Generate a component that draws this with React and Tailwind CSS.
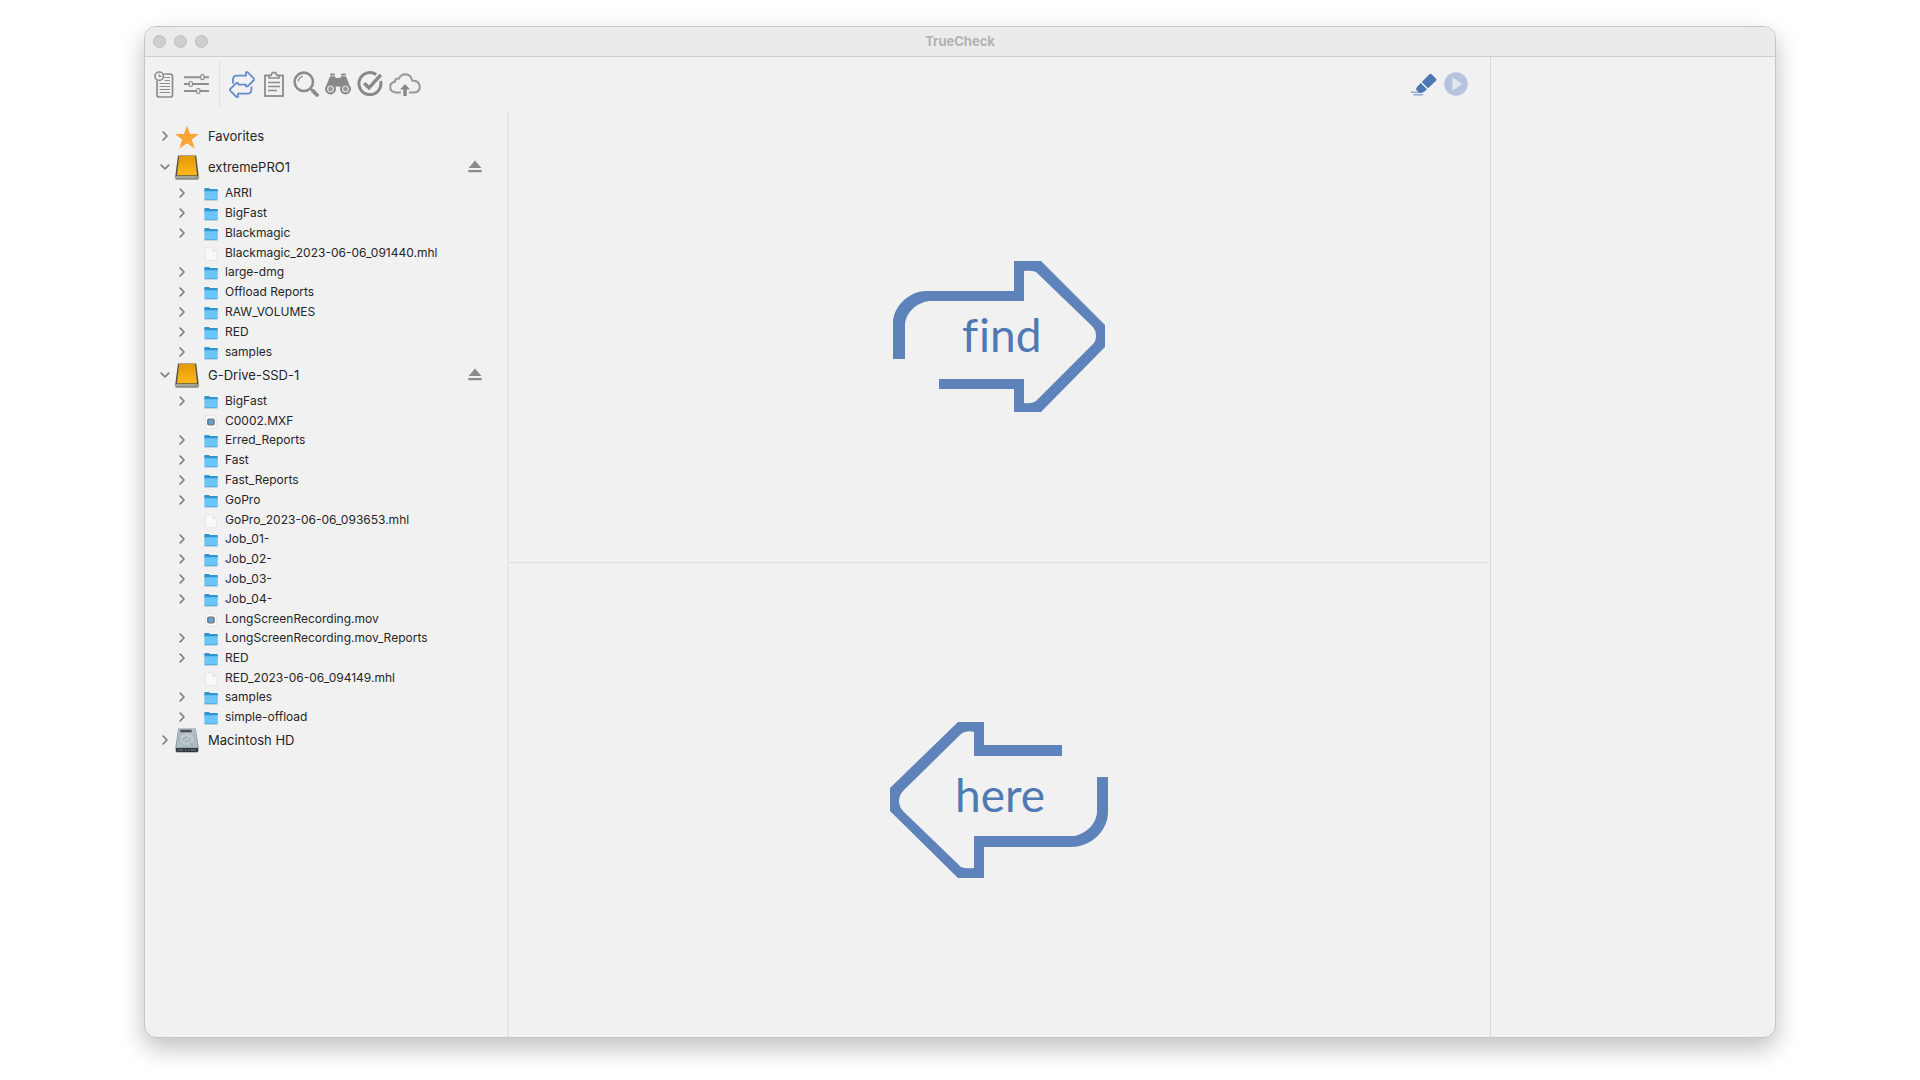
import React, { useState } from "react";

const VOLUMES = [
  { name: "Favorites", icon: "star", children: [] },
  {
    name: "extremePRO1",
    icon: "drive",
    ejectable: true,
    children: [
      { name: "ARRI", type: "folder" },
      { name: "BigFast", type: "folder" },
      { name: "Blackmagic", type: "folder" },
      { name: "Blackmagic_2023-06-06_091440.mhl", type: "file" },
      { name: "large-dmg", type: "folder" },
      { name: "Offload Reports", type: "folder" },
      { name: "RAW_VOLUMES", type: "folder" },
      { name: "RED", type: "folder" },
      { name: "samples", type: "folder" },
    ],
  },
  {
    name: "G-Drive-SSD-1",
    icon: "drive",
    ejectable: true,
    children: [
      { name: "BigFast", type: "folder" },
      { name: "C0002.MXF", type: "movie" },
      { name: "Erred_Reports", type: "folder" },
      { name: "Fast", type: "folder" },
      { name: "Fast_Reports", type: "folder" },
      { name: "GoPro", type: "folder" },
      { name: "GoPro_2023-06-06_093653.mhl", type: "file" },
      { name: "Job_01-", type: "folder" },
      { name: "Job_02-", type: "folder" },
      { name: "Job_03-", type: "folder" },
      { name: "Job_04-", type: "folder" },
      { name: "LongScreenRecording.mov", type: "movie" },
      { name: "LongScreenRecording.mov_Reports", type: "folder" },
      { name: "RED", type: "folder" },
      { name: "RED_2023-06-06_094149.mhl", type: "file" },
      { name: "samples", type: "folder" },
      { name: "simple-offload", type: "folder" },
    ],
  },
  { name: "Macintosh HD", icon: "internal", children: [] },
];

const Chevron = ({ open }) => (
  <svg viewBox="0 0 10 10" className="w-[10px] h-[10px]" fill="none" stroke="#808080" strokeWidth="1.7" strokeLinecap="round" strokeLinejoin="round">
    <path d={open ? "M1.2 3.2 5 6.8 8.8 3.2" : "M3.2 1.2 7 5 3.2 8.8"} />
  </svg>
);

const StarIcon = () => (
  <svg viewBox="0 0 24 24" className="w-6 h-6" fill="#fba43a">
    <path d="M12 0.5 15.1 9H24L16.9 14.4 19.6 23.5 12 18.2 4.4 23.5 7.1 14.4 0 9H8.9Z" />
  </svg>
);

const DriveIcon = () => (
  <svg viewBox="0 0 24 25" className="w-6 h-[25px]">
    <defs>
      <linearGradient id="drive-top" x1="0" y1="0" x2="0" y2="1">
        <stop offset="0" stopColor="#e39a00" />
        <stop offset="1" stopColor="#ffb81a" />
      </linearGradient>
    </defs>
    <path d="M3 .5H21.2L23.6 20V23.4Q23.6 24.5 22.4 24.5H1.6Q.4 24.5 .4 23.4V20Z" fill="#57534b" />
    <path d="M4.2 1H20L22 20.2H2Z" fill="url(#drive-top)" />
    <rect x=".8" y="21" width="22.4" height="2.8" rx="1" fill="#a5a59f" />
    <circle cx="21.4" cy="22.2" r=".9" fill="#3fbf4e" />
  </svg>
);

const InternalDriveIcon = () => (
  <svg viewBox="0 0 24 25" className="w-6 h-[25px]">
    <path d="M3.2 .5H20.8L23.6 19V22.6Q23.6 24.5 21.8 24.5H2.2Q.4 24.5 .4 22.6V19Z" fill="#86949a" />
    <path d="M3.6 1H20.4L22.7 19.4H1.3Z" fill="#b0bec3" />
    <ellipse cx="12" cy="11" rx="7.6" ry="6.8" fill="#bccace" stroke="#9fadb1" strokeWidth=".8" />
    <path d="M8 12.5Q8.4 9 12.5 8.8M10 13.5Q15 14 15.5 9.8M15 15 18.5 18" fill="none" stroke="#8d9ca1" strokeWidth=".9" />
    <rect x="5.2" y="1.8" width="11.5" height="2.4" rx=".4" fill="#4b5356" />
    <path d="M1 20H23V22.4Q23 24 21.6 24H2.4Q1 24 1 22.4Z" fill="#31383a" />
    <path d="M3 22H8M10 22H11.5M13 22H14.5M16 22H21" stroke="#7d878a" strokeWidth="1" />
  </svg>
);

const FolderIcon = () => (
  <svg viewBox="0 0 14 14" className="w-[14px] h-[14px]">
    <path d="M.3 1.8Q.3 1 1.1 1H4.8L6 2.1H13Q13.8 2.1 13.8 2.9V5H.3Z" fill="#2f95cf" />
    <path d="M.3 4.3H13.8V12.3Q13.8 13.1 13 13.1H1.1Q.3 13.1 .3 12.3Z" fill="#6bc6f8" />
    <path d="M.6 12.9H13.4" stroke="#4b9ac4" strokeWidth=".8" />
  </svg>
);

const FileIcon = () => (
  <svg viewBox="0 0 14 14" className="w-[14px] h-[14px]">
    <path d="M1.5 .6H8.4L12.5 4.7V13.4H1.5Z" fill="#f9f9f9" stroke="#e2e2e2" strokeWidth=".7" />
    <path d="M8.4 .6V4.7H12.5" fill="#ececec" stroke="#dedede" strokeWidth=".5" />
  </svg>
);

const MovieIcon = () => (
  <svg viewBox="0 0 14 14" className="w-[14px] h-[14px]">
    <path d="M1.5 .6H9.4L12.5 3.7V13.4H1.5Z" fill="#fafafa" stroke="#dedede" strokeWidth=".7" />
    <rect x="3" y="3.4" width="7.8" height="7.2" rx="2" fill="#777d82" />
    <circle cx="6.9" cy="7" r="2.4" fill="#5fa3e4" />
  </svg>
);

const EjectIcon = () => (
  <svg viewBox="0 0 14 13" className="w-[14px] h-[13px]" fill="#8a8a8a">
    <path d="M7 .5 13.4 8H.6Z" />
    <rect x=".3" y="10" width="13.4" height="2.2" />
  </svg>
);

const VOLUME_ICONS = {
  star: StarIcon,
  drive: DriveIcon,
  internal: InternalDriveIcon,
};

const ENTRY_ICONS = {
  folder: FolderIcon,
  file: FileIcon,
  movie: MovieIcon,
};

/* Toolbar icons */

const ReportIcon = () => (
  <svg viewBox="0 0 20 27" className="w-5 h-[27px]" fill="none" stroke="#8c8c8c">
    <path d="M9.5 3H16Q18.5 3 18.5 5.5V24Q18.5 26 16.5 26H5Q3 26 3 24V9.5" strokeWidth="1.7" />
    <path d="M10.5 6.5H16M10.5 9.5H16M5.5 12.5H16M5.5 15.5H16M5.5 18.5H16M5.5 21.5H16" strokeWidth="1.2" />
    <circle cx="5.2" cy="5.2" r="4.2" strokeWidth="1.6" />
    <path d="M5.2 3V5.4H7.4" strokeWidth="1.1" />
  </svg>
);

const SlidersIcon = () => (
  <svg viewBox="0 0 25 20" className="w-[25px] h-5" fill="#f1f1f1" stroke="#8f8f8f">
    <path d="M0 3.2H25M0 10H25M0 17H25" strokeWidth="2" />
    <rect x="16.8" y=".7" width="3.2" height="5" rx="1.2" strokeWidth="1.2" />
    <rect x="5.2" y="7.5" width="3.2" height="5" rx="1.2" strokeWidth="1.2" />
    <rect x="12.7" y="14.5" width="3.2" height="5" rx="1.2" strokeWidth="1.2" />
  </svg>
);

const CompareIcon = () => (
  <svg viewBox="0 0 26 27" className="w-[26px] h-[27px]" fill="none" stroke="#678dca" strokeWidth="1.8" strokeLinejoin="round">
    <path d="M4 12.5V8.5Q4 4.7 7.8 4.7H17V1.2H18.6L25 7.7V9L18.6 15.4H17V13.6H9" />
    <path d="M22.4 15.5V18.8Q22.4 22.6 18.6 22.6H9V26H7.5L1 19.4V18.2L7.5 11.8H9V13.6" />
  </svg>
);

const ClipboardIcon = () => (
  <svg viewBox="0 0 20 26" className="w-5 h-[26px]" fill="none" stroke="#8c8c8c">
    <rect x="1" y="4.5" width="18" height="20.5" strokeWidth="1.8" />
    <path d="M5 7V4.5H7L8.3 1.6H11.7L13 4.5H15V7Z" fill="#f1f1f1" strokeWidth="1.6" />
    <path d="M4 11.5H16M4 15.5H16M4 19.5H13" strokeWidth="1.5" />
  </svg>
);

const MagnifierIcon = () => (
  <svg viewBox="0 0 26 26" className="w-[26px] h-[26px]" fill="none" stroke="#8c8c8c">
    <circle cx="10.8" cy="10.8" r="9.2" strokeWidth="2.6" />
    <path d="M5.2 10.5Q5.8 6.2 9.8 5.3" strokeWidth="1.2" />
    <path d="M17.5 17.5 20 20" strokeWidth="2" />
    <path d="M19.7 19.7 24 24" strokeWidth="3.8" strokeLinecap="round" />
  </svg>
);

const BinocularsIcon = () => (
  <svg viewBox="0 0 26 22" className="w-[26px] h-[22px]">
    <path d="M5 3.2H9.8L10.8 5H15.2L16.2 3.2H21L25.6 15L20.5 20 16.2 16 15.2 13.4H10.8L9.8 16 5.5 20 .4 15Z" fill="#888" />
    <rect x="5" y=".4" width="5" height="2.2" rx="1" fill="#888" />
    <rect x="16" y=".4" width="5" height="2.2" rx="1" fill="#888" />
    <circle cx="5.5" cy="16" r="4.5" fill="#d4d4d4" stroke="#888" strokeWidth="1.9" />
    <circle cx="20.5" cy="16" r="4.5" fill="#d4d4d4" stroke="#888" strokeWidth="1.9" />
    <circle cx="5.5" cy="16" r="2.2" fill="#999" />
    <circle cx="20.5" cy="16" r="2.2" fill="#999" />
  </svg>
);

const CheckIcon = () => (
  <svg viewBox="0 0 26 26" className="w-[26px] h-[26px]" fill="none" stroke="#888">
    <path d="M19.2 3.6A11 11 0 1 0 23.6 10" strokeWidth="3" />
    <path d="M7.2 12.2 12 16.8 23.8 3.8" strokeWidth="3.4" />
  </svg>
);

const CloudIcon = () => (
  <svg viewBox="0 0 32 23" className="w-8 h-[23px]">
    <path d="M12 19.5H7Q1.2 19 1.2 14 1.2 9.6 5.8 8.8 6.2 5.4 9.8 5.6 12 1.2 16.4 1.2 22 1.4 23.2 7.6 30.4 7.8 30.8 13.6 30.6 19 25.4 19.5H20" fill="none" stroke="#95989c" strokeWidth="2" />
    <path d="M16 11 21 16.4H17.7V23H14.3V16.4H11Z" fill="#85888c" />
  </svg>
);

const EraserIcon = () => (
  <svg viewBox="0 0 26 23" className="w-[26px] h-[23px]">
    <path d="M0 19.2H11M2.5 21.8H12" stroke="#8ba5d0" strokeWidth="1.6" />
    <g fill="#4c77b5">
      <path d="M18.2 1.4Q19.6 .2 20.9 1.4L24.9 5.4Q26 6.6 24.8 7.9L17 15.2 10.8 9Z" />
      <path d="M9.8 10 16 16.2 13.5 18.6Q12 20 8.5 20L5 16.6Q5.2 14.8 6.4 13.4Z" />
    </g>
  </svg>
);

const PlayIcon = () => (
  <svg viewBox="0 0 24 24" className="w-6 h-6">
    <circle cx="12" cy="12" r="11.8" fill="#b6c4dd" />
    <path d="M8.4 5.4 18.2 12 8.4 18.8Z" fill="#e2e8f2" />
  </svg>
);

const ToolButton = ({ label, children }) => (
  <button type="button" aria-label={label} className="flex items-center justify-center shrink-0">
    {children}
  </button>
);

const TitleBar = () => (
  <header className="grid grid-cols-3 items-center h-[30px] shrink-0 px-2 pb-px bg-[#ebebeb] border-b border-[#cfcfcf]">
    <div className="flex items-center gap-2">
      <button type="button" aria-label="Close" className="w-[13px] h-[13px] rounded-full bg-[#cecece] border border-[#bdbdbd]" />
      <button type="button" aria-label="Minimize" className="w-[13px] h-[13px] rounded-full bg-[#cecece] border border-[#bdbdbd]" />
      <button type="button" aria-label="Zoom" className="w-[13px] h-[13px] rounded-full bg-[#cecece] border border-[#bdbdbd]" />
    </div>
    <h1 className="text-center text-[13px] leading-4 font-bold text-[#b2b2b2]">TrueCheck</h1>
  </header>
);

const Toolbar = () => (
  <div className="flex items-center h-[54px] shrink-0 pl-[9px] pr-[22px]">
    <div className="flex items-center gap-[10px] pr-[10px]">
      <ToolButton label="Reports"><ReportIcon /></ToolButton>
      <ToolButton label="Settings"><SlidersIcon /></ToolButton>
    </div>
    <div className="w-px h-[46px] bg-[#e0e0e0]" />
    <div className="flex items-center gap-[6px] pl-[9px]">
      <ToolButton label="Compare"><CompareIcon /></ToolButton>
      <div className="flex items-center px-[3px]">
        <ToolButton label="Clipboard"><ClipboardIcon /></ToolButton>
      </div>
      <ToolButton label="Search"><MagnifierIcon /></ToolButton>
      <ToolButton label="Find"><BinocularsIcon /></ToolButton>
      <ToolButton label="Verify"><CheckIcon /></ToolButton>
      <ToolButton label="Upload"><CloudIcon /></ToolButton>
    </div>
    <div className="flex items-center gap-[7px] ml-auto">
      <ToolButton label="Clear"><EraserIcon /></ToolButton>
      <ToolButton label="Start"><PlayIcon /></ToolButton>
    </div>
  </div>
);

const Entry = ({ entry }) => {
  const Icon = ENTRY_ICONS[entry.type];
  const isFolder = entry.type === "folder";

  return (
    <li className={`flex items-center pl-8 ${isFolder ? "h-5" : "h-[19px]"}`}>
      <span className="w-[27px] shrink-0">
        {isFolder && (
          <button type="button" aria-label={`Expand ${entry.name}`} className="block">
            <Chevron />
          </button>
        )}
      </span>
      <span className="pt-[2px]">
        <Icon />
      </span>
      <span className="pl-[7px] text-xs text-[#262626] whitespace-nowrap">{entry.name}</span>
    </li>
  );
};

const Volume = ({ volume }) => {
  const [open, setOpen] = useState(volume.children.length > 0);
  const Icon = VOLUME_ICONS[volume.icon];

  return (
    <li>
      <div className="flex items-center h-[31px] pl-[15px] pr-[25px]">
        <button
          type="button"
          aria-expanded={open}
          onClick={() => setOpen(!open)}
          className="flex items-center"
        >
          <Chevron open={open} />
          <span className="pl-[5px] pt-[2px]">
            <Icon />
          </span>
          <span className="pl-[9px] text-[13px] leading-5 text-[#262626] whitespace-nowrap">{volume.name}</span>
        </button>
        {volume.ejectable && (
          <button type="button" aria-label={`Eject ${volume.name}`} className="ml-auto">
            <EjectIcon />
          </button>
        )}
      </div>
      {open && volume.children.length > 0 && (
        <ul className="pt-px -mb-[3px]">
          {volume.children.map((entry) => (
            <Entry key={entry.name} entry={entry} />
          ))}
        </ul>
      )}
    </li>
  );
};

const FindArrow = () => (
  <svg viewBox="0 0 213 152" className="w-[213px] h-[152px]">
    <path
      fill="#5e83bb"
      fillRule="evenodd"
      d="M0 98V62C0 46 16 30 33 30H121V0H148L212 64V86L148 151H121V128H46V118H131V142Q139 143 143 140L199 84Q203 81 203 75 203 69 199 65L143 11Q138 9 131 10V40H36C23 42 12 52 12 65V98Z"
    />
    <text x="69" y="91" fontSize="46" fill="#5079b4" fontFamily="Lato, 'Open Sans', sans-serif">
      <tspan>f</tspan>
      <tspan x="86">ind</tspan>
    </text>
  </svg>
);

const HereArrow = () => (
  <svg viewBox="0 0 219 157" className="w-[219px] h-[157px]">
    <path
      fill="#5e83bb"
      fillRule="evenodd"
      d="M172 23V34H84V10Q76 8 71 12L14 68Q9 73 9 79 9 85 14 90L71 145Q76 147 84 146V114H185C197 111 207 101 207 89V55H218V90C218 108 202 125 181 125H94V156H68L0 89V66L68 0H94V23Z"
    />
    <text x="65" y="90" fontSize="46" fill="#5079b4" fontFamily="Lato, 'Open Sans', sans-serif">
      here
    </text>
  </svg>
);

export default function App() {
  return (
    <div className="flex min-h-screen bg-white px-36 pt-[26px] pb-[42px] font-['Inter','Liberation_Sans',sans-serif]">
      <div className="flex flex-col flex-1 min-w-0 overflow-hidden bg-[#f1f1f1] border border-[#c6c6c6] rounded-xl shadow-[0_10px_24px_rgba(0,0,0,0.25)]">
        <TitleBar />
        <div className="flex flex-1">
          <div className="flex flex-col flex-1 min-w-0">
            <Toolbar />
            <div className="flex flex-1">
              <nav aria-label="Volumes" className="w-[364px] shrink-0 pt-[9px] border-r-2 border-[#e6e6e6]">
                <ul>
                  {VOLUMES.map((volume) => (
                    <Volume key={volume.name} volume={volume} />
                  ))}
                </ul>
              </nav>
              <main className="flex flex-col flex-1">
                <section className="flex flex-[20] items-center justify-center border-b border-[#dedede]">
                  <FindArrow />
                </section>
                <section className="flex flex-[21] items-center justify-center">
                  <HereArrow />
                </section>
              </main>
            </div>
          </div>
          <aside className="w-[285px] shrink-0 border-l border-[#d8d8d8]" />
        </div>
      </div>
    </div>
  );
}
